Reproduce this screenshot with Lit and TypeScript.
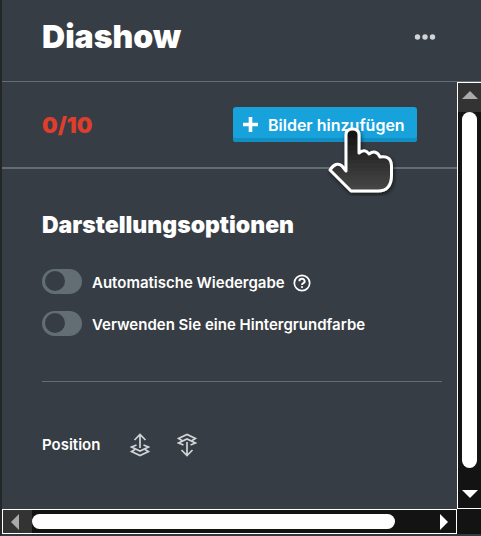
import { LitElement, html, css } from "lit";
import { customElement, property, state } from "lit/decorators.js";

@customElement("toggle-row")
class ToggleRow extends LitElement {
  @property() label = "";
  @property({ type: Boolean }) help = false;

  static styles = css`
    :host { display: flex; align-items: center; height: 42px; }
    .row { display: flex; align-items: center; }
    .switch {
      appearance: none; margin: 0 10px 0 0; width: 40px; height: 25px; flex: none;
      border-radius: 13px; background: #636e74; display: flex; align-items: center;
      padding: 0 3px; box-sizing: border-box; cursor: pointer;
    }
    .switch::before {
      content: ""; width: 20px; height: 20px; border-radius: 50%; background: #373d44;
    }
    .switch:checked { justify-content: flex-end; background: #17a2dc; }
    .text { padding-top: 3px; font-size: 15px; line-height: 20px; font-weight: 600; color: #fff; white-space: nowrap; }
    .help {
      appearance: none; border: 0; padding: 3px 0 0; margin: 0 0 0 8px; background: none;
      display: block; cursor: pointer;
    }
    .help svg { display: block; }
  `;

  render() {
    return html`
      <label class="row"><input class="switch" type="checkbox" role="switch" /><span class="text">${this.label}</span></label>
      ${this.help
        ? html`<button class="help" aria-label="Hilfe">
            <svg width="18" height="18" viewBox="0 0 18 18" fill="none" stroke="#fff">
              <circle cx="9" cy="9" r="7.7" stroke-width="1.7" />
              <path d="M6.4 7.2a2.6 2.4 0 1 1 3.9 2q-1.3.7-1.3 1.9" stroke-width="1.9" />
              <circle cx="9" cy="13" r="1.1" fill="#fff" stroke="none" />
            </svg>
          </button>`
        : ""}
    `;
  }
}

@customElement("app-root")
class AppRoot extends LitElement {
  @state() private count = 0;
  private readonly max = 10;

  static styles = css`
    :host {
      display: flex; flex-direction: column; min-height: 100vh; box-sizing: border-box;
      border-left: 2px solid #23272a; border-bottom: 2px solid #343941;
      background: #373d44; color: #fff; font-family: Inter, "Open Sans", sans-serif;
    }
    button { appearance: none; border: 0; margin: 0; padding: 0; background: none; font: inherit; color: inherit; cursor: pointer; }
    svg { display: block; }
    .header {
      display: flex; align-items: center; justify-content: space-between;
      height: 82px; padding: 0 45px 8px 40px; border-bottom: 1px solid #636e74; box-sizing: border-box;
    }
    .title { margin: 0; font-size: 32px; line-height: 40px; font-weight: 900; }
    .main { flex: 1; display: grid; grid-template-columns: minmax(0, 1fr) 24px; grid-template-rows: 1fr 25px; }
    .panel { display: flex; flex-direction: column; }
    .toolbar {
      display: flex; align-items: center; justify-content: space-between;
      height: 87px; box-sizing: border-box; padding: 0 40px; border-bottom: 2px solid #636e74;
    }
    .count { font-size: 22px; line-height: 32px; font-weight: 900; color: #e03e2d; }
    .add {
      position: relative; display: flex; align-items: center; gap: 10px; height: 35px;
      min-width: 184px; box-sizing: border-box;
      padding: 0 10px; border-radius: 3px; background: #17a2dc;
      box-shadow: inset 0 -4px #118fc5; font-size: 16px; font-weight: 600; white-space: nowrap;
    }
    .cursor { position: absolute; left: 92px; top: 13px; pointer-events: none; }
    .options { padding: 40px 15px 36px 40px; }
    .subtitle { margin: 0 0 19px; font-size: 23px; line-height: 32px; font-weight: 900; white-space: nowrap; }
    .rule { border: 0; border-top: 1px solid #636e74; margin: 37px 0 51px; }
    .position { display: flex; align-items: center; font-size: 15px; line-height: 24px; font-weight: 600; }
    .name { width: 88px; }
    .layer + .layer { margin-left: 27px; }
    .bar { display: flex; align-items: center; box-sizing: border-box; border: 1px solid #fff; background: #131313; }
    .vertical { flex-direction: column; border-right: 0; }
    .corner { background: #131313; }
    .step { flex: none; display: flex; align-items: center; justify-content: center; box-sizing: border-box; }
    .vertical .step { width: 23px; height: 29px; }
    .horizontal .step { width: 29px; height: 23px; padding-left: 4px; }
    .step.off { background: #333; }
    .vertical .off { padding-bottom: 6px; }
    .horizontal .off { padding: 0 6px 0 0; }
    .thumb { background: #fff; border-radius: 8px; }
    .vertical .thumb { width: 15px; flex: 1; margin-bottom: 11px; }
    .horizontal .thumb { height: 15px; flex: 1; margin-right: 32px; }
  `;

  render() {
    return html`
      <header class="header">
        <h1 class="title">Diashow</h1>
        <button aria-label="Mehr">
          <svg width="22" height="8" viewBox="0 0 22 8" fill="#d2d5d7">
            <circle cx="3.5" cy="4" r="2.7" /><circle cx="11" cy="4" r="2.7" /><circle cx="18.5" cy="4" r="2.7" />
          </svg>
        </button>
      </header>
      <div class="main">
        <main class="panel">
          <section class="toolbar">
            <span class="count">${this.count}/${this.max}</span>
            <button class="add" @click=${() => (this.count = Math.min(this.max, this.count + 1))}>
              <svg width="15" height="15" viewBox="0 0 15 15" stroke="#fff" stroke-width="3.6"><path d="M7.5 0v15M0 7.5h15" /></svg>
              <span>Bilder hinzufügen</span>
              <svg class="cursor" width="72" height="76" viewBox="0 0 72 76">
                <defs>
                  <linearGradient id="ink" x1="0" y1="0" x2="0" y2="1">
                    <stop offset="0" stop-color="#111" /><stop offset="1" stop-color="#484848" />
                  </linearGradient>
                  <filter id="shade" x="-20%" y="-20%" width="150%" height="150%">
                    <feDropShadow dx="1" dy="2" stdDeviation="2" flood-color="#000" flood-opacity=".6" />
                  </filter>
                </defs>
                <path filter="url(#shade)" fill="url(#ink)" stroke="#fff" stroke-width="3" stroke-linejoin="round"
                  d="M21 15Q21 9 27.500 9T34 15V33Q40 28 44 34Q51 29 55 37Q66 35 66.500 46V56Q66 71 53 71H26L5 50Q11 41 17 46L21 51Z" />
              </svg>
            </button>
          </section>
          <section class="options">
            <h2 class="subtitle">Darstellungsoptionen</h2>
            <toggle-row label="Automatische Wiedergabe" help></toggle-row>
            <toggle-row label="Verwenden Sie eine Hintergrundfarbe"></toggle-row>
            <hr class="rule" />
            <div class="position">
              <span class="name">Position</span>
              <button class="layer" aria-label="Nach vorne">
                <svg width="20" height="24" viewBox="0 0 20 24" fill="none" stroke="#d2d5d7" stroke-width="1.7">
                  <path d="M10 15V2M4.500 7L10 1.500L15.500 7M6.500 12L1.500 14L10 18L18.500 14L13.500 12M5 16.500L1.500 18.500L10 22.500L18.500 18.500L15 16.500" />
                </svg>
              </button>
              <button class="layer" aria-label="Nach hinten">
                <svg width="20" height="24" viewBox="0 0 20 24" fill="none" stroke="#d2d5d7" stroke-width="1.7">
                  <path d="M10 9V22M4.500 17L10 22.500L15.500 17M6.500 12L1.500 10L10 6L18.500 10L13.500 12M5 7.500L1.500 5.500L10 1.500L18.500 5.500L15 7.500" />
                </svg>
              </button>
            </div>
          </section>
        </main>
        <div class="bar vertical">
          <button class="step off" aria-label="Nach oben"><svg width="16" height="8" fill="#aaa"><path d="M0 8L8 0L16 8Z" /></svg></button>
          <div class="thumb"></div>
          <button class="step" aria-label="Nach unten"><svg width="16" height="8" fill="#fff"><path d="M0 0L8 8L16 0Z" /></svg></button>
        </div>
        <div class="bar horizontal">
          <button class="step off" aria-label="Nach links"><svg width="8" height="16" fill="#aaa"><path d="M8 0L0 8L8 16Z" /></svg></button>
          <div class="thumb"></div>
          <button class="step" aria-label="Nach rechts"><svg width="8" height="16" fill="#fff"><path d="M0 0L8 8L0 16Z" /></svg></button>
        </div>
        <div class="corner"></div>
      </div>
    `;
  }
}
